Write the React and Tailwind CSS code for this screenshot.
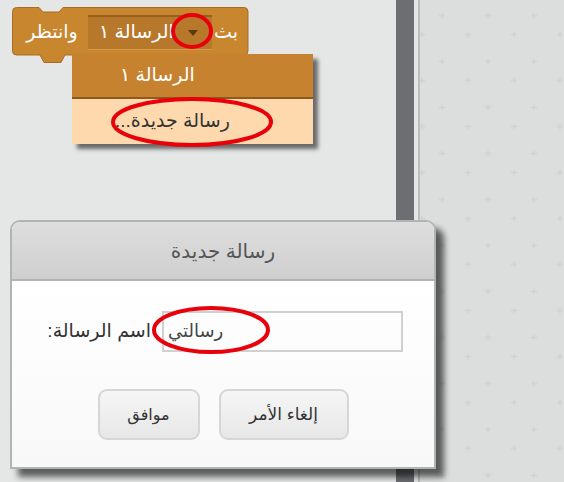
import React from "react";

const font = { fontFamily: "'Liberation Sans', 'DejaVu Sans', sans-serif" };

function Block() {
  return (
    <div className="relative w-[237px] h-[57px] ml-[12px] mt-[7px]">
      <svg className="absolute inset-0" width="237" height="57" viewBox="0 0 237 57">
        <path
          d="M0.5,4.5 Q0.5,0.5 4.5,0.5 H27 L31,5 H47 L51,0.5 H232 Q236,0.5 236,4.5 V44 Q236,48 232,48 H53 L49,55.5 H32 L28,48 H4.5 Q0.5,48 0.5,44 Z"
          fill="#c8862f"
          stroke="#a86d24"
        />
      </svg>
      <div className="relative flex items-center h-[48px] pl-[12px] pt-[2px] text-white text-[19px]" style={font}>
        <span dir="rtl" className="w-[56px] text-center">وانتظر</span>
        <div className="ml-[8px] w-[124px] h-[35px] flex items-center bg-[#b7782c] border-t-2 border-[#96611f] border-b border-b-[#d49a4c] pl-[11px]">
          <span dir="rtl">الرسالة ١</span>
          <span className="ml-[14px] w-0 h-0 border-l-[5px] border-r-[5px] border-t-[6px] border-l-transparent border-r-transparent border-t-[#5a3a12]"></span>
        </div>
        <span dir="rtl" className="ml-[2px]">بث</span>
      </div>
    </div>
  );
}

function Menu() {
  return (
    <div className="absolute left-[72px] top-[54px] w-[241px] shadow-[5px_5px_4px_rgba(0,0,0,0.55)] text-[19px]" style={font}>
      <div className="h-[43px] bg-[#c6822f] flex items-center pl-[48px] text-white">
        <span dir="rtl">الرسالة ١</span>
      </div>
      <div className="h-[2px] bg-[#8c5a1c]"></div>
      <div className="h-[45px] bg-[#fdd9ad] flex items-center pl-[43px] text-[#333]">
        <span dir="rtl">رسالة جديدة...</span>
      </div>
    </div>
  );
}

function Dialog() {
  return (
    <div
      className="absolute left-[10px] top-[220px] w-[426px] h-[249px] flex flex-col border-2 border-[#b3b3b3] rounded-t-[10px] bg-white shadow-[8px_8px_6px_rgba(0,0,0,0.6)]"
      style={font}
    >
      <div className="h-[59px] shrink-0 flex items-center justify-center rounded-t-[8px] bg-gradient-to-b from-[#dedede] to-[#cfcfcf] border-b-2 border-[#b3b3b3] text-[20px] text-[#555]">
        <span dir="rtl">رسالة جديدة</span>
      </div>
      <div className="flex-1 flex flex-col bg-gradient-to-b from-white to-[#f8f8f8]">
        <div className="flex items-center justify-end gap-[11px] mt-[30px] pr-[31px]">
          <span dir="rtl" className="text-[19px] text-[#333]">اسم الرسالة:</span>
          <div className="w-[241px] h-[41px] border-2 border-[#d0d0d0] flex items-center pl-[4px] text-[18px] text-[#444]">
            <span dir="rtl">رسالتي</span>
          </div>
        </div>
        <div className="flex justify-center gap-[19px] mt-[37px]">
          <button className="w-[102px] h-[51px] rounded-[9px] border-2 border-[#d6d6d6] bg-gradient-to-b from-[#f6f6f6] to-[#e7e7e7] text-[16px] text-[#333]">
            <span dir="rtl">موافق</span>
          </button>
          <button className="w-[130px] h-[51px] rounded-[9px] border-2 border-[#d6d6d6] bg-gradient-to-b from-[#f6f6f6] to-[#e7e7e7] text-[17px] text-[#333]">
            <span dir="rtl">إلغاء الأمر</span>
          </button>
        </div>
      </div>
    </div>
  );
}

export default function App() {
  return (
    <div className="relative w-[564px] h-[482px] overflow-hidden flex bg-[#e5e7e6]">
      <div className="w-[396px] h-full bg-[#e5e7e6]">
        <Block />
      </div>
      <div className="w-[18px] h-full bg-[#6d6e72]"></div>
      <div className="w-[4px] h-full bg-[#e4e6e6]"></div>
      <div className="w-[2px] h-full bg-[#bcbcbc]"></div>
      <div className="flex-1 h-full bg-[#dcdddd] relative">
        <svg className="absolute inset-0" width="100%" height="100%">
          <defs>
            <pattern id="plus" width="46" height="46" patternUnits="userSpaceOnUse" x="-1" y="0">
              <path d="M23,12.5 V18.5 M20,15.5 H26" stroke="#d0d1d1" strokeWidth="1.3" />
              <path d="M3,31.5 V37.5 M0,34.5 H6" stroke="#d0d1d1" strokeWidth="1.3" />
            </pattern>
          </defs>
          <rect width="100%" height="100%" fill="url(#plus)" />
        </svg>
      </div>
      <Menu />
      <Dialog />
      <svg className="absolute inset-0 pointer-events-none" width="564" height="482">
        <ellipse cx="192" cy="31" rx="19" ry="16" fill="none" stroke="#e8000b" strokeWidth="4" />
        <ellipse cx="192" cy="122" rx="79" ry="23" fill="none" stroke="#e8000b" strokeWidth="4" />
        <ellipse cx="211" cy="330" rx="57" ry="22" fill="none" stroke="#e8000b" strokeWidth="4" />
      </svg>
    </div>
  );
}
